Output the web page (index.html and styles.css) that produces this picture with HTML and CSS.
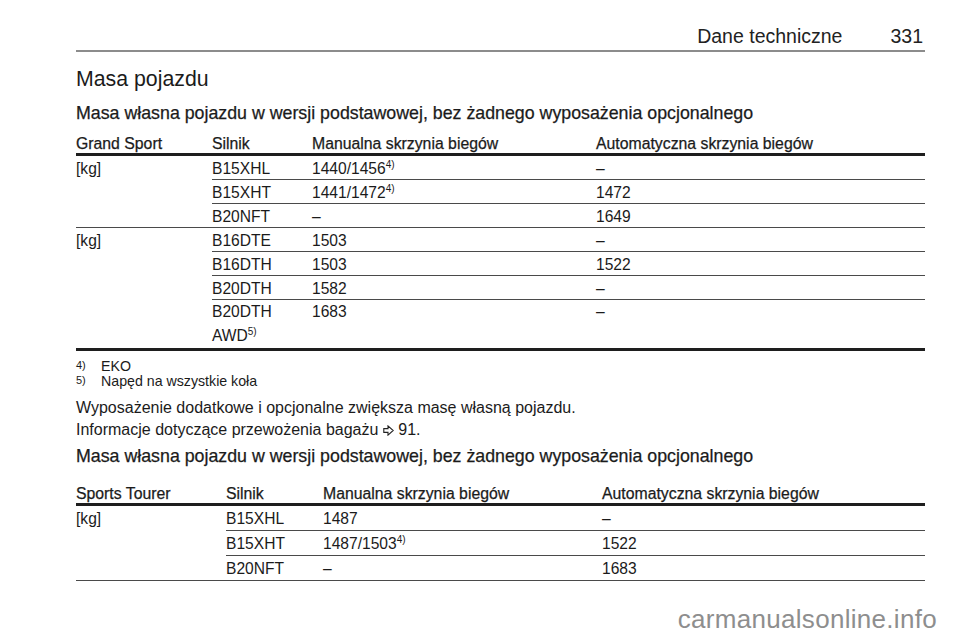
FILE: index.html
```html
<!DOCTYPE html>
<html lang="pl">
<head>
<meta charset="utf-8">
<title>Dane techniczne 331</title>
<link rel="stylesheet" href="styles.css">
</head>
<body>
<div class="page">
  <header class="running-head">
    <span class="chapter">Dane techniczne</span>
    <span class="pageno">331</span>
  </header>

  <h1 class="title">Masa pojazdu</h1>
  <h2 class="subtitle first">Masa własna pojazdu w wersji podstawowej, bez żadnego wyposażenia opcjonalnego</h2>

  <table class="spec t1">
    <colgroup>
      <col class="c1"><col class="c2"><col class="c3"><col class="c4">
    </colgroup>
    <thead>
      <tr><th>Grand Sport</th><th>Silnik</th><th>Manualna skrzynia biegów</th><th>Automatyczna skrzynia biegów</th></tr>
    </thead>
    <tbody>
      <tr><td class="grp" rowspan="3">[kg]</td><td>B15XHL</td><td>1440/1456<sup>4)</sup></td><td>–</td></tr>
      <tr><td>B15XHT</td><td>1441/1472<sup>4)</sup></td><td>1472</td></tr>
      <tr><td>B20NFT</td><td>–</td><td>1649</td></tr>
      <tr><td class="grp" rowspan="4">[kg]</td><td>B16DTE</td><td>1503</td><td>–</td></tr>
      <tr><td>B16DTH</td><td>1503</td><td>1522</td></tr>
      <tr><td>B20DTH</td><td>1582</td><td>–</td></tr>
      <tr class="tall"><td>B20DTH<br>AWD<sup>5)</sup></td><td>1683</td><td>–</td></tr>
    </tbody>
  </table>

  <div class="notes">
    <div class="note"><span class="mark">4)</span><span>EKO</span></div>
    <div class="note"><span class="mark">5)</span><span>Napęd na wszystkie koła</span></div>
  </div>

  <p class="para">Wyposażenie dodatkowe i opcjonalne zwiększa masę własną pojazdu.</p>
  <p class="para">Informacje dotyczące przewożenia bagażu <svg class="ref" width="11" height="11" viewBox="0 0 11 11" aria-hidden="true"><path d="M0.8 3.6 H5 V0.9 L10.2 5.5 L5 10.1 V7.4 H0.8 Z" fill="none" stroke="#222" stroke-width="1.1" stroke-linejoin="miter"/></svg> 91.</p>

  <h2 class="subtitle second">Masa własna pojazdu w wersji podstawowej, bez żadnego wyposażenia opcjonalnego</h2>

  <table class="spec t2">
    <colgroup>
      <col class="c1"><col class="c2"><col class="c3"><col class="c4">
    </colgroup>
    <thead>
      <tr><th>Sports Tourer</th><th>Silnik</th><th>Manualna skrzynia biegów</th><th>Automatyczna skrzynia biegów</th></tr>
    </thead>
    <tbody>
      <tr><td class="grp" rowspan="3">[kg]</td><td>B15XHL</td><td>1487</td><td>–</td></tr>
      <tr><td>B15XHT</td><td>1487/1503<sup>4)</sup></td><td>1522</td></tr>
      <tr><td>B20NFT</td><td>–</td><td>1683</td></tr>
    </tbody>
  </table>
</div>
<div class="watermark">carmanualsonline.info</div>
</body>
</html>
```

FILE: styles.css
```css
html, body {
  margin: 0;
  padding: 0;
  background: #ffffff;
}
body {
  font-family: "Liberation Sans", Arial, sans-serif;
  color: #1b1b1b;
  width: 960px;
  height: 642px;
  position: relative;
  overflow: hidden;
}
.page {
  padding: 0 35px 0 76px;
}
.running-head {
  display: flex;
  justify-content: flex-end;
  gap: 48px;
  padding-top: 24px;
  padding-bottom: 2px;
  padding-right: 2px;
  font-size: 19.5px;
  line-height: 24px;
  color: #222;
  border-bottom: 2px solid #8c8c8c;
}
.title {
  margin: 15px 0 0;
  font-size: 21.3px;
  line-height: 24px;
  font-weight: normal;
  color: #1b1b1b;
}
.subtitle {
  margin: 11px 0 0;
  font-size: 17.8px;
  line-height: 22px;
  font-weight: normal;
  -webkit-text-stroke: 0.25px #1b1b1b;
}
.subtitle.second {
  margin-top: 4px;
}
.spec {
  border-collapse: collapse;
  width: 849px;
  table-layout: fixed;
  font-size: 15.6px;
}
.t1 { margin-top: 11px; }
.t2 { margin-top: 18px; }
.t1 .c1 { width: 136px; }
.t1 .c2 { width: 100px; }
.t1 .c3 { width: 284px; }
.t1 .c4 { width: 329px; }
.t2 .c1 { width: 150px; }
.t2 .c2 { width: 97px; }
.t2 .c3 { width: 279px; }
.t2 .c4 { width: 323px; }
.spec th {
  text-align: left;
  font-weight: normal;
  font-size: 15.8px;
  -webkit-text-stroke: 0.25px #1b1b1b;
  padding: 0;
  line-height: 18px;
  border-bottom: 3px solid #1e1e1e;
  vertical-align: bottom;
  white-space: nowrap;
}
.spec td {
  padding: 2px 0 0;
  line-height: 21px;
  vertical-align: top;
  border-bottom: 1px solid #4a4a4a;
  white-space: nowrap;
}
.t2 td {
  line-height: 22px;
}
.spec tr.tall td {
  padding-top: 0;
  line-height: 24px;
  height: 48px;
  border-bottom: 3px solid #1e1e1e;
}
.t1 tbody tr:nth-child(4) td.grp {
  border-bottom: 3px solid #1e1e1e;
}
.spec sup {
  font-size: 10px;
  line-height: 0;
  vertical-align: 6px;
}
.notes {
  margin-top: 8px;
  font-size: 14.2px;
  line-height: 15px;
}
.note {
  display: flex;
  align-items: baseline;
}
.note .mark {
  width: 25px;
  font-size: 11px;
  line-height: 11px;
  position: relative;
  top: -2px;
}
.para {
  margin: 0;
  font-size: 16px;
  line-height: 22px;
}
.notes + .para {
  margin-top: 8px;
}
.ref {
  vertical-align: -1px;
}
.watermark {
  position: absolute;
  right: 23px;
  bottom: 8px;
  font-size: 26px;
  line-height: 30px;
  color: #8e8e8e;
  letter-spacing: 0.3px;
}
```
